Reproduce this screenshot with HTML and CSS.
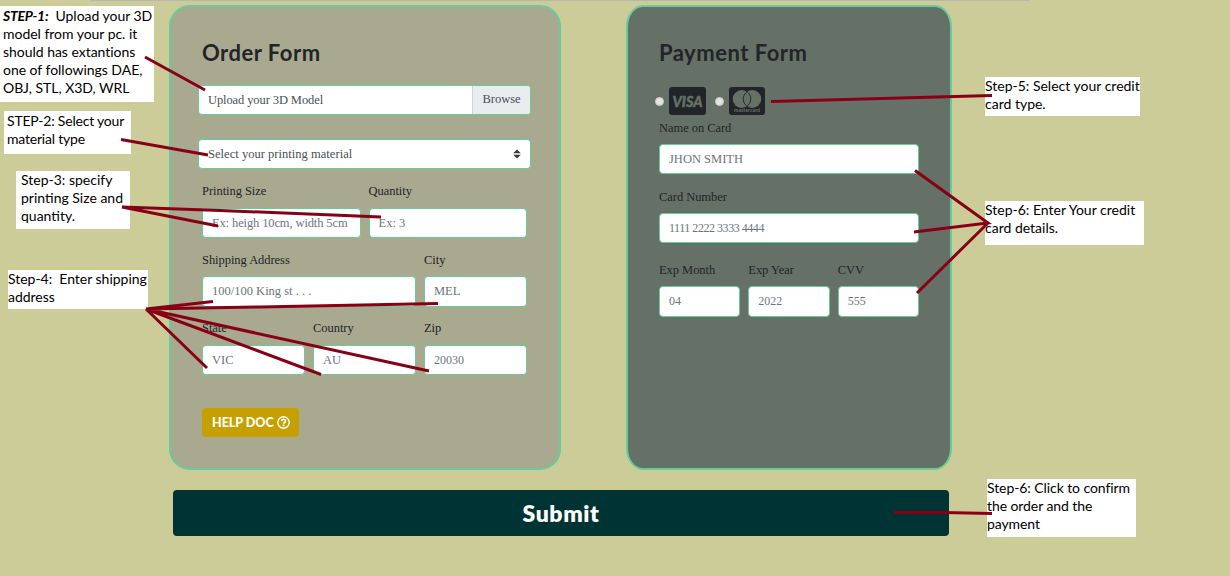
FILE: index.html
```html
<!DOCTYPE html>
<html lang="en">
<head>
<meta charset="utf-8">
<title>Order Form</title>
<link rel="stylesheet" href="styles.css">
</head>
<body>
<div class="topline"></div>
<main class="page">
  <div class="cards">
    <section class="card order">
      <h2 class="title">Order Form</h2>
      <div class="field wide file"><span class="t-up">Upload your 3D Model</span><span class="browse">Browse</span></div>
      <div class="field wide select"><span class="t-sel">Select your printing material</span>
        <svg class="caret" width="8" height="10" viewBox="0 0 8 10"><path d="M4 .5L7.8 4.300H.2zM4 9.500L.2 5.700h7.600z" fill="#343a40"/></svg>
      </div>
      <div class="row">
        <div class="col"><label>Printing Size</label><div class="field ph"><span class="t-ex">Ex: heigh 10cm, width 5cm</span></div></div>
        <div class="col"><label>Quantity</label><div class="field ph">Ex: 3</div></div>
      </div>
      <div class="row thirds address">
        <div class="col two"><label>Shipping Address</label><div class="field ph tall">100/100 King st . . .</div></div>
        <div class="col"><label>City</label><div class="field ph tall">MEL</div></div>
      </div>
      <div class="row thirds">
        <div class="col"><label>State</label><div class="field ph">VIC</div></div>
        <div class="col"><label>Country</label><div class="field ph">AU</div></div>
        <div class="col"><label>Zip</label><div class="field ph num">20030</div></div>
      </div>
      <div class="help"><span>HELP DOC</span>
        <svg width="13" height="13" viewBox="0 0 13 13" fill="none" stroke="#fff"><circle cx="6.5" cy="6.5" r="5.7" stroke-width="1.4"/><path d="M4.6 5.1c.2-2.4 4-2.2 3.9.1 0 1.3-1.9 1.3-1.9 2.6" stroke-width="1.7"/><path d="M5.7 9.4h1.8" stroke-width="1.7"/></svg>
      </div>
    </section>
    <section class="card payment">
      <h2 class="title">Payment Form</h2>
      <div class="types">
        <i class="radio"></i>
        <svg class="brand" width="37" height="28" viewBox="0 0 37 28"><rect width="37" height="28" rx="3" fill="#212529"/><text x="3.5" y="19.500" textLength="30" lengthAdjust="spacingAndGlyphs" class="visa">VISA</text></svg>
        <i class="radio"></i>
        <svg class="brand" width="36" height="28" viewBox="0 0 36 28"><rect width="36" height="28" rx="3" fill="#212529"/><circle cx="12.7" cy="12" r="9" fill="#657066"/><circle cx="23.3" cy="12" r="9" fill="#657066"/><path d="M18 4.7a9 9 0 0 1 0 14.6a9 9 0 0 1 0-14.6z" fill="#657066" stroke="#212529" stroke-width=".9"/><text x="5" y="25" textLength="26" lengthAdjust="spacingAndGlyphs" class="mc">mastercard</text></svg>
      </div>
      <div class="col name"><label>Name on Card</label><div class="field ph">JHON SMITH</div></div>
      <div class="col number"><label>Card Number</label><div class="field ph num">1111 2222 3333 4444</div></div>
      <div class="row exp">
        <div class="col"><label>Exp Month</label><div class="field ph tall num">04</div></div>
        <div class="col"><label>Exp Year</label><div class="field ph tall num">2022</div></div>
        <div class="col"><label>CVV</label><div class="field ph tall num">555</div></div>
      </div>
    </section>
  </div>
  <div class="submit">Submit</div>
</main>
<aside class="note n1"><b>STEP-1:</b>&nbsp; Upload your 3D<br>model from your pc. it<br>should has extantions<br>one of followings DAE,<br>OBJ, STL, X3D, WRL</aside>
<aside class="note n2">STEP-2: Select your<br>material type</aside>
<aside class="note n3">Step-3: specify<br>printing Size and<br>quantity.</aside>
<aside class="note n4">Step-4:&nbsp; Enter shipping<br>address</aside>
<aside class="note n5">Step-5: Select your credit<br>card type.</aside>
<aside class="note n6">Step-6: Enter Your credit<br>card details.</aside>
<aside class="note n7">Step-6: Click to confirm<br>the order and the<br>payment</aside>
<svg class="lines" width="1230" height="576" viewBox="0 0 1230 576">
  <path d="M145 57L205 90M121 139.500L208 155M122 207L220 210.500L381 217M122 207L218 226M146 309L213 301.500M146 309L260 307L438 303.500M146 309L429 371M146 309L321 374.500M146 309L207 368M771 101.500L992 95.500M915 170.500L988 223L914 232M988 223L917 293M894 512.500H943L992 513.500"/>
</svg>
</body>
</html>
```
FILE: styles.css
```css
* { box-sizing: border-box; }
body {
  margin: 0;
  width: 1230px;
  height: 576px;
  overflow: hidden;
  position: relative;
  background: #cccc99;
  color: #212529;
  font: 12.5px/17px "Liberation Serif", serif;
}
.topline { height: 1px; margin: 0 201px 0 91px; background: #b8b5b5; }
.page { padding: 4px 0 0 169px; }
.cards { display: flex; gap: 65px; height: 465px; }
.card { border: 2px solid #66cc99; padding: 0 31px; }
.order { width: 392px; padding-right: 32px; border-radius: 21px; background: #a9a98f; }
.payment { width: 326px; border-radius: 17px / 22px; background: #657066; }
.title {
  margin: 31px 0 17px;
  font: 700 22px/30px "Lato", sans-serif;
  letter-spacing: .5px;
  white-space: nowrap;
}
.field {
  height: 30px;
  display: flex;
  align-items: center;
  padding: 0 9px;
  border: 1px solid #66cc99;
  border-radius: 4px;
  background: #fff;
  color: #495057;
  white-space: nowrap;
  overflow: hidden;
}
.tall { height: 31px; padding-bottom: 1px; }
.ph { color: #6c757d; }
.num { padding-top: 1px; font-size: 12px; }
.number .num { letter-spacing: -.46px; }
.wide { margin: 0 -4px 24px; justify-content: space-between; }
.file { padding: 0 0 0 9px; }
.t-up { letter-spacing: -.1px; }
.t-sel { letter-spacing: .03px; }
.t-ex { letter-spacing: -.12px; }
.browse {
  width: 58px;
  height: 30px;
  text-align: center;
  line-height: 29px;
  border-left: 1px solid #ced4da;
  background: #e9ecef;
}
.select { margin-bottom: 13px; }
.row { display: flex; gap: 8px; margin-bottom: 13px; }
.col { flex: 1; min-width: 0; }
.thirds { display: grid; grid-template-columns: repeat(3, 1fr); }
.address { margin-bottom: 12px; }
.address label { height: 25px; }
.two { grid-column: span 2; }
label { display: block; height: 26px; line-height: 18px; letter-spacing: -.05px; white-space: nowrap; }
.payment label { height: 25px; }
.help {
  display: flex;
  align-items: center;
  gap: 4px;
  width: 97px;
  height: 29px;
  margin-top: 33px;
  padding-left: 10px;
  border-radius: 4px;
  background: #c6a000;
  color: #fff;
  font: 900 12.5px "Lato", sans-serif;
  white-space: nowrap;
}
.help svg { flex: none; margin-left: -1px; }
.types { display: flex; align-items: center; height: 28px; margin: 19px 0 4px -4px; }
.radio { width: 9px; height: 9px; border-radius: 50%; background: #e3e3e3; border: 1px solid #c9c9c9; }
.brand { margin: 0 9px 0 5px; }
.visa { font: italic 900 14.5px "Lato", sans-serif; fill: #657066; stroke: #657066; stroke-width: .5; }
.mc { font: 700 5.5px "Lato", sans-serif; fill: #657066; }
.payment .name { margin-bottom: 14px; }
.payment .number { margin-bottom: 18px; }
.submit {
  width: 776px;
  height: 46px;
  margin: 20px 0 0 4px;
  border-radius: 4px;
  background: #003333;
  color: #fff;
  text-align: center;
  font: 800 23px/46px "Lato", sans-serif;
  letter-spacing: .6px;
}
.note {
  position: absolute;
  background: #fff;
  color: #000;
  font: 14px/18px "Lato", sans-serif;
  white-space: nowrap;
}
.note b { font-style: italic; }
.n1 { left: 0; top: 6px; width: 154px; height: 96px; padding: 1px 3px; letter-spacing: -.03px; }
.n1 b { letter-spacing: -.25px; }
.n2 { left: 4px; top: 111px; width: 127px; height: 43px; padding: 1px 3px; letter-spacing: -.2px; }
.n3 { left: 16px; top: 171px; width: 114px; height: 58px; padding: 0 5px; }
.n4 { left: 8px; top: 270px; width: 140px; height: 39px; letter-spacing: -.02px; }
.n5 { left: 985px; top: 77px; width: 155px; height: 39px; }
.n6 { left: 985px; top: 201px; width: 159px; height: 44px; }
.n7 { left: 987px; top: 479px; width: 149px; height: 58px; letter-spacing: -.08px; }
.lines { position: absolute; left: 0; top: 0; fill: none; stroke: #880015; stroke-width: 3; pointer-events: none; }
```
